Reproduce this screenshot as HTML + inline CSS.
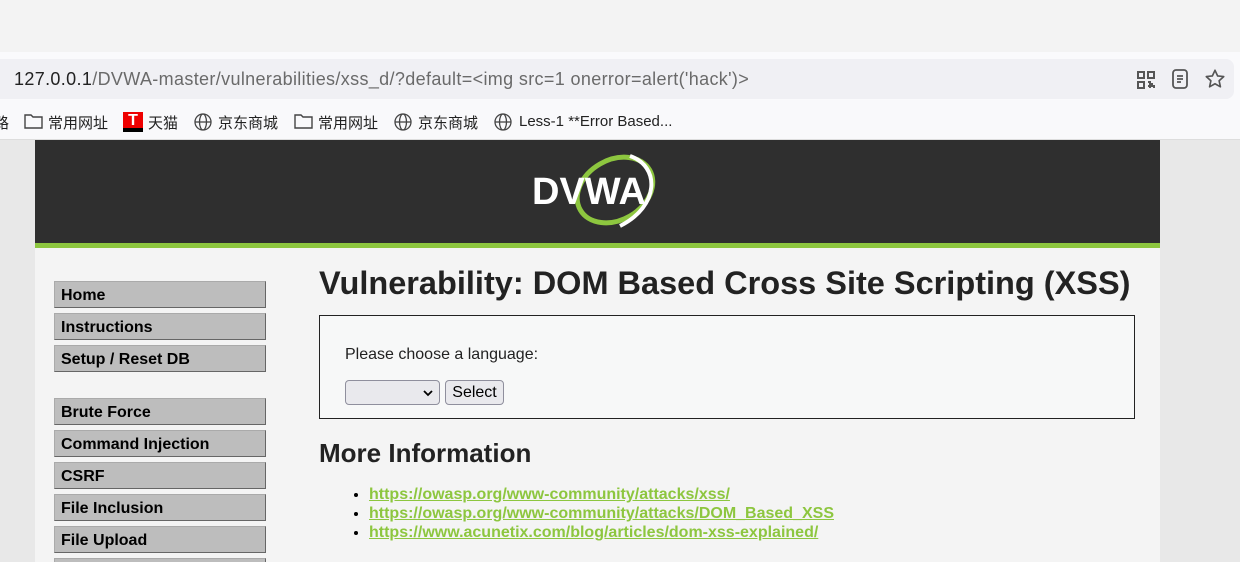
<!DOCTYPE html>
<html><head><meta charset="utf-8"><style>
*{margin:0;padding:0;box-sizing:border-box}
html,body{width:1240px;height:562px;overflow:hidden}
body{background:#e8e8e8;font-family:"Liberation Sans","Noto Sans CJK SC",sans-serif;position:relative}
.top{position:absolute;left:0;top:0;width:1240px;height:52px;background:#f3f3f3}
.addr{position:absolute;left:0;top:52px;width:1240px;height:48px;background:#fafafc}
.bar{position:absolute;left:-10px;top:59px;width:1244px;height:40px;background:#f0f0f4;border-radius:8px}
.url{position:absolute;left:14px;top:69px;font-size:18px;letter-spacing:0.35px;color:#6a6a6a;white-space:nowrap}
.url b{font-weight:normal;color:#222}
.bm{position:absolute;left:0;top:100px;width:1240px;height:40px;background:#f9f9fb;border-bottom:1px solid #ddd;font-size:15px;color:#222}
.bm span{position:absolute;top:12px;white-space:nowrap}
.page{position:absolute;left:35px;top:140px;width:1125px;height:422px;background:#f4f4f4;overflow:hidden}
.hdr{background:#2f2f2f;border-bottom:5px solid #8dc63f;height:108px;position:relative}
.menu{position:absolute;left:19px;width:212px;height:27px;background:#bdbdbd;border:1px solid #aaa;border-bottom-color:#666;border-right-color:#666;font-weight:bold;font-size:16px;padding:5px 0 0 6px;color:#000}
h1{position:absolute;left:284px;top:125px;font-size:32.5px;color:#222;white-space:nowrap}
.box{position:absolute;left:284px;top:175px;width:816px;height:104px;border:1px solid #222;background:#f7f8f8}
h2{position:absolute;left:284px;top:298px;font-size:26px;color:#222}
ul{position:absolute;left:334px;top:345px;font-size:16px;font-weight:bold;line-height:19px}
ul a{color:#8dc63f;text-decoration:underline}
</style></head><body>
<div class="top"></div>
<div class="addr"></div><div class="bar"></div>
<div class="url"><b>127.0.0.1</b>/DVWA-master/vulnerabilities/xss_d/?default=&lt;img src=1 onerror=alert('hack')&gt;</div>
<svg style="position:absolute;left:1136px;top:70px" width="20" height="20" viewBox="0 0 20 20" fill="none" stroke="#555" stroke-width="2"><rect x="2" y="2" width="6" height="6"/><rect x="12" y="2" width="6" height="6"/><rect x="2" y="12" width="6" height="6"/><path d="M12 12h2v2h2v2h2v2M12 16h2v2"/></svg>
<svg style="position:absolute;left:1171px;top:69px" width="18" height="20" viewBox="0 0 18 20" fill="none" stroke="#555" stroke-width="1.8"><rect x="2" y="1" width="14" height="18" rx="3"/><path d="M6 7h6M6 10h6M6 13h4"/></svg>
<svg style="position:absolute;left:1204px;top:68px" width="22" height="22" viewBox="0 0 24 24" fill="none" stroke="#555" stroke-width="1.8"><path d="M12 2.5l2.9 6.2 6.6.7-5 4.5 1.4 6.6L12 17.2l-5.9 3.3 1.4-6.6-5-4.5 6.6-.7z" stroke-linejoin="round"/></svg>
<div class="bm">
<span style="left:-6px">路</span>
<svg style="position:absolute;left:24px;top:13px" width="19" height="16" viewBox="0 0 19 16" fill="none" stroke="#444" stroke-width="1.4"><path d="M1 2h6l2 2h9v11H1z"/></svg>
<span style="left:48px">常用网址</span>
<div style="position:absolute;left:123px;top:12px;width:20px;height:20px;background:#e00;color:#fff;font-weight:bold;font-size:16px;text-align:center;line-height:18px;border-bottom:4px solid #000">T</div>
<span style="left:148px">天猫</span>
<svg style="position:absolute;left:194px;top:13px" width="18" height="18" viewBox="0 0 18 18" fill="none" stroke="#444" stroke-width="1.3"><circle cx="9" cy="9" r="8"/><ellipse cx="9" cy="9" rx="3.5" ry="8"/><path d="M1 9h16"/></svg>
<span style="left:218px">京东商城</span>
<svg style="position:absolute;left:294px;top:13px" width="19" height="16" viewBox="0 0 19 16" fill="none" stroke="#444" stroke-width="1.4"><path d="M1 2h6l2 2h9v11H1z"/></svg>
<span style="left:318px">常用网址</span>
<svg style="position:absolute;left:394px;top:13px" width="18" height="18" viewBox="0 0 18 18" fill="none" stroke="#444" stroke-width="1.3"><circle cx="9" cy="9" r="8"/><ellipse cx="9" cy="9" rx="3.5" ry="8"/><path d="M1 9h16"/></svg>
<span style="left:418px">京东商城</span>
<svg style="position:absolute;left:494px;top:13px" width="18" height="18" viewBox="0 0 18 18" fill="none" stroke="#444" stroke-width="1.3"><circle cx="9" cy="9" r="8"/><ellipse cx="9" cy="9" rx="3.5" ry="8"/><path d="M1 9h16"/></svg>
<span style="left:519px;top:13px">Less-1 **Error Based...</span>
</div>
<div class="page">
<div class="hdr">
<svg style="position:absolute;left:495px;top:12px" width="135" height="78" viewBox="0 0 135 78"><ellipse cx="85" cy="38" rx="40" ry="30" fill="none" stroke="#8dc63f" stroke-width="5" transform="rotate(-30 85 38)"/><path d="M100 4c30 10 30 50-10 70" fill="none" stroke="#fff" stroke-width="4"/><text x="2" y="52" fill="#fff" font-family="Liberation Sans" font-weight="bold" font-size="38">DVWA</text></svg>
</div>
<div class="menu" style="top:141px">Home</div>
<div class="menu" style="top:173px">Instructions</div>
<div class="menu" style="top:205px">Setup / Reset DB</div>
<div class="menu" style="top:258px">Brute Force</div>
<div class="menu" style="top:290px">Command Injection</div>
<div class="menu" style="top:322px">CSRF</div>
<div class="menu" style="top:354px">File Inclusion</div>
<div class="menu" style="top:386px">File Upload</div>
<div class="menu" style="top:418px"></div>
<h1>Vulnerability: DOM Based Cross Site Scripting (XSS)</h1>
<div class="box">
<div style="position:absolute;left:25px;top:30px;font-size:16px;color:#222">Please choose a language:</div>
<div style="position:absolute;left:25px;top:64px;width:95px;height:25px;background:#e9e9ed;border:1px solid #8f8f9d;border-radius:4px"><svg style="position:absolute;right:6px;top:8px" width="10" height="8" viewBox="0 0 10 8"><path d="M1 2l4 4 4-4" fill="none" stroke="#000" stroke-width="1.8"/></svg></div>
<div style="position:absolute;left:125px;top:64px;width:59px;height:25px;background:#e9e9ed;border:1px solid #8f8f9d;border-radius:4px;font-size:16px;text-align:center;line-height:23px;color:#000">Select</div>
</div>
<h2>More Information</h2>
<ul>
<li><a>https://owasp.org/www-community/attacks/xss/</a></li>
<li><a>https://owasp.org/www-community/attacks/DOM_Based_XSS</a></li>
<li><a>https://www.acunetix.com/blog/articles/dom-xss-explained/</a></li>
</ul>
</div>
</body></html>
